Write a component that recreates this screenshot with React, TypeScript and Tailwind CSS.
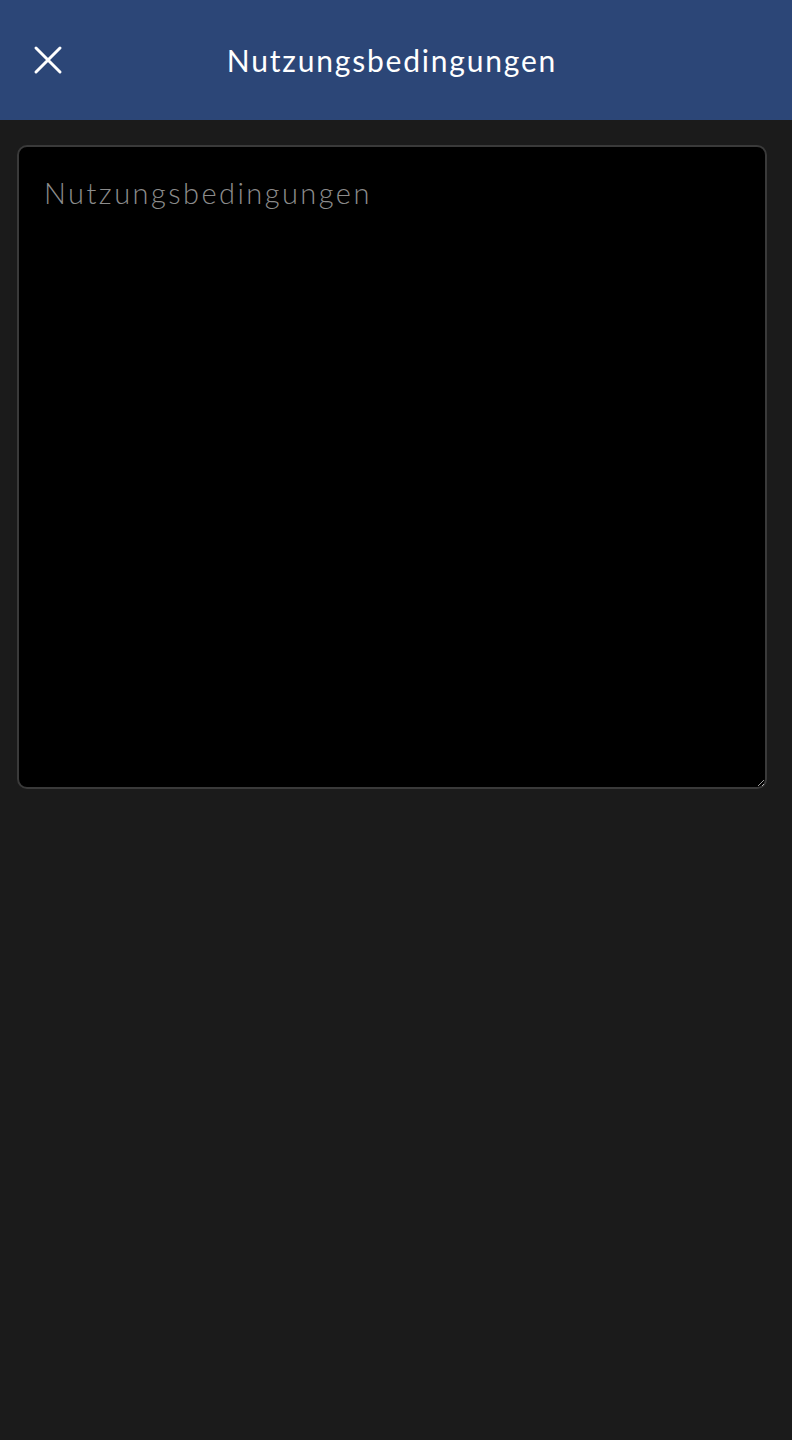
import React from "react";

export default function App() {
  return (
    <div className="min-h-[1440px] w-full bg-[#1b1b1b] flex flex-col" style={{ fontFamily: "Lato, 'Noto Sans', sans-serif" }}>
      <header className="h-[120px] bg-[#2c4677] flex items-center relative">
        <button className="absolute left-[30px] top-[42px] w-[36px] h-[36px] flex items-center justify-center">
          <svg width="30" height="30" viewBox="0 0 30 30" fill="none" stroke="#ffffff" strokeWidth="3" strokeLinecap="round">
            <path d="M3 3 L27 27 M27 3 L3 27" />
          </svg>
        </button>
        <h1 className="w-full text-center text-white text-[30px] font-normal tracking-[1.8px] leading-none pr-[8px]">Nutzungsbedingungen</h1>
      </header>
      <div className="pl-[17px] pr-[25px] pt-[25px]">
        <textarea
          placeholder="Nutzungsbedingungen"
          className="block w-full h-[644px] bg-black border-2 border-[#3a3a3a] rounded-[10px] px-[25px] pt-[28px] text-[29px] leading-[36px] tracking-[2.45px] text-white placeholder:text-[#8c8c8c] font-light outline-none"
          style={{ fontFamily: "Lato, 'Noto Sans', sans-serif" }}
        />
      </div>
    </div>
  );
}
